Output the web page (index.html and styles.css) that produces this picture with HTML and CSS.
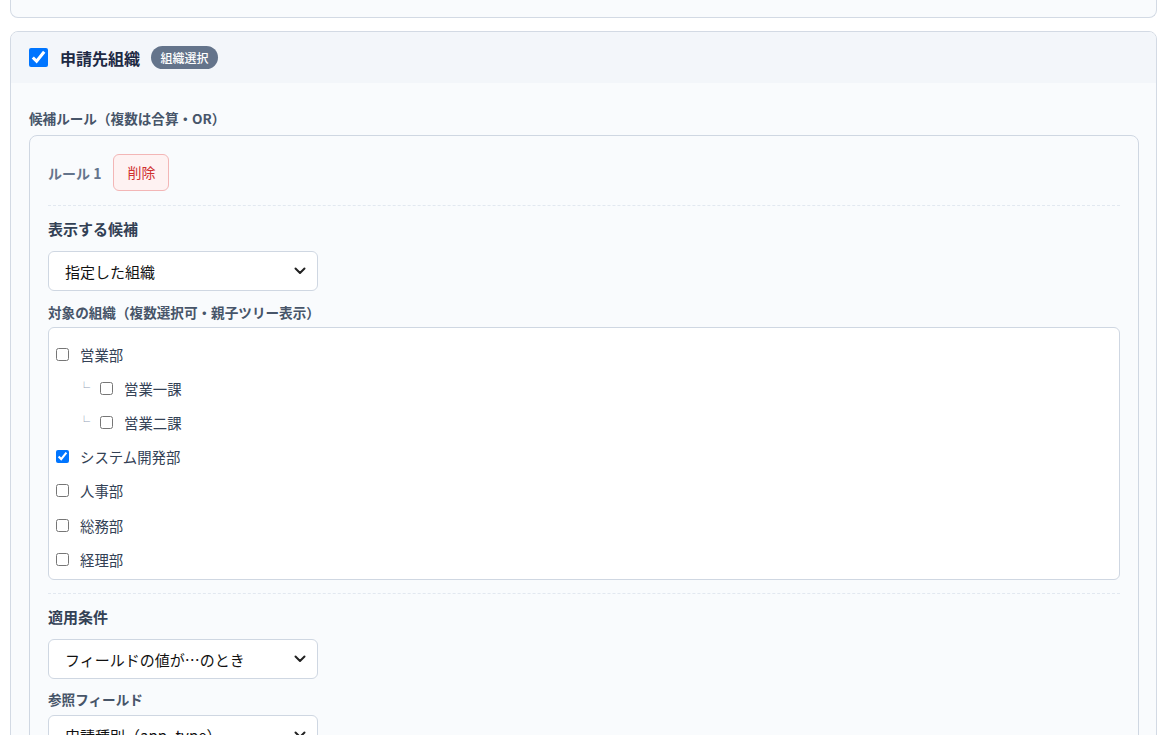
FILE: index.html
```html
<!DOCTYPE html>
<html lang="ja">
<head>
  <meta charset="UTF-8">
  <meta name="viewport" content="width=device-width, initial-scale=1.0">
  <title>申請先組織</title>
  <link rel="stylesheet" href="styles.css">
</head>
<body>

<div class="page">
  <div class="card card-prev"></div>

  <div class="card">
    <div class="card-head">
      <input type="checkbox" class="head-check" checked>
      <span class="card-title">申請先組織</span>
      <span class="badge">組織選択</span>
    </div>

    <div class="card-body">
      <div class="small-label">候補ルール（複数は合算・OR）</div>

      <div class="rule">
        <div class="rule-head">
          <span class="rule-name">ルール 1</span>
          <button class="btn-delete">削除</button>
        </div>

        <div class="field-label">表示する候補</div>
        <div class="select-wrap">
          <select class="select">
            <option>指定した組織</option>
          </select>
          <svg class="chevron" width="12" height="8" viewBox="0 0 12 8"><path d="M1.5 1.5 6 6l4.5-4.5" fill="none" stroke="#222" stroke-width="2" stroke-linecap="round" stroke-linejoin="round"/></svg>
        </div>

        <div class="small-label sub">対象の組織（複数選択可・親子ツリー表示）</div>
        <div class="tree">
          <label class="tree-row"><input type="checkbox"><span>営業部</span></label>
          <label class="tree-row child"><span class="branch">└</span><input type="checkbox"><span>営業一課</span></label>
          <label class="tree-row child"><span class="branch">└</span><input type="checkbox"><span>営業二課</span></label>
          <label class="tree-row"><input type="checkbox" checked><span>システム開発部</span></label>
          <label class="tree-row"><input type="checkbox"><span>人事部</span></label>
          <label class="tree-row"><input type="checkbox"><span>総務部</span></label>
          <label class="tree-row"><input type="checkbox"><span>経理部</span></label>
        </div>

        <div class="divider"></div>

        <div class="field-label">適用条件</div>
        <div class="select-wrap">
          <select class="select">
            <option>フィールドの値が…のとき</option>
          </select>
          <svg class="chevron" width="12" height="8" viewBox="0 0 12 8"><path d="M1.5 1.5 6 6l4.5-4.5" fill="none" stroke="#222" stroke-width="2" stroke-linecap="round" stroke-linejoin="round"/></svg>
        </div>

        <div class="small-label sub last">参照フィールド</div>
        <div class="select-wrap">
          <select class="select">
            <option>申請種別（app_type）</option>
          </select>
          <svg class="chevron" width="12" height="8" viewBox="0 0 12 8"><path d="M1.5 1.5 6 6l4.5-4.5" fill="none" stroke="#222" stroke-width="2" stroke-linecap="round" stroke-linejoin="round"/></svg>
        </div>
      </div>
    </div>
  </div>
</div>

</body>
</html>
```

FILE: styles.css
```css
body {
  margin: 0;
  background-color: #fff;
  font-family: "Noto Sans CJK JP", "Noto Sans", sans-serif;
  color: #1e293b;
}

.page {
  padding: 0 8px 0 10px;
}

.card {
  border: 1px solid #d3dae4;
  border-radius: 8px;
  background-color: #f9fbfd;
  margin-bottom: 13px;
  overflow: hidden;
}

.card-prev {
  height: 17px;
  border-top: none;
  border-radius: 0 0 8px 8px;
}

.card-head {
  display: flex;
  align-items: center;
  height: 51px;
  padding: 0 18px;
  background-color: #f3f6fa;
}

.head-check {
  width: 19px;
  height: 19px;
  margin: 0 12px 0 0;
}

.card-title {
  font-size: 16px;
  font-weight: 700;
  color: #1e2a44;
}

.badge {
  margin-left: 11px;
  padding: 0 9.5px;
  height: 23px;
  line-height: 23px;
  border-radius: 12px;
  background-color: #64748b;
  color: #fff;
  font-size: 12px;
  font-weight: 500;
}

.card-body {
  padding: 25px 17px 0 18px;
}

.small-label {
  font-size: 13.6px;
  font-weight: 700;
  line-height: 20px;
  color: #475569;
  margin-bottom: 7px;
}

.small-label.sub {
  margin-top: 11px;
  margin-bottom: 5px;
}

.small-label.last {
  margin-top: 10px;
  margin-bottom: 6px;
}

.rule {
  border: 1px solid #cfd7e2;
  border-radius: 8px;
  background-color: #f9fbfd;
  padding: 18px 18px 20px;
}

.rule-head {
  display: flex;
  align-items: center;
  gap: 12px;
  padding-bottom: 14px;
  border-bottom: 1px dashed #e2e8f0;
  margin-bottom: 12px;
}

.rule-name {
  font-size: 14px;
  font-weight: 700;
  color: #64748b;
}

.btn-delete {
  font-family: inherit;
  font-size: 14px;
  line-height: 19px;
  padding: 8px 13px;
  color: #d03030;
  background-color: #fef2f2;
  border: 1px solid #f3b6b6;
  border-radius: 6px;
}

.field-label {
  font-size: 15px;
  font-weight: 700;
  line-height: 22px;
  color: #334155;
  margin-bottom: 11px;
}

.select-wrap {
  position: relative;
  width: 270px;
}

.select {
  appearance: none;
  width: 100%;
  height: 40px;
  padding: 0 30px 0 16px;
  font-family: "Noto Sans CJK JP", sans-serif;
  font-size: 15px;
  color: #111;
  background-color: #fff;
  border: 1px solid #cfd7e2;
  border-radius: 6px;
}

.chevron {
  position: absolute;
  right: 12px;
  top: 16px;
  pointer-events: none;
}

.tree {
  border: 1px solid #cfd7e2;
  border-radius: 6px;
  background-color: #fff;
  padding: 9px 7px 3px;
}

.tree-row {
  display: flex;
  align-items: center;
  height: 34.2px;
  font-size: 14.4px;
  color: #334155;
}

.tree-row input {
  width: 13px;
  height: 13px;
  margin: 0 11px 0 0;
}

.tree-row.child {
  padding-left: 28px;
}

.branch {
  font-size: 12px;
  color: #94a3b8;
  width: 16px;
  margin-left: -6px;
  margin-right: 6px;
  margin-top: -1px;
}

.divider {
  border-top: 1px dashed #e2e8f0;
  margin: 13px 0 12px;
}
```
